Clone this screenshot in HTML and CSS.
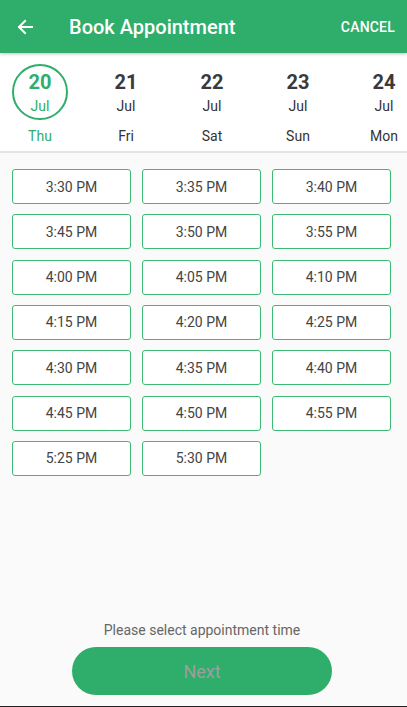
FILE: index.html
```html
<!DOCTYPE html>
<html lang="en">
<head>
  <meta charset="UTF-8" />
  <meta name="viewport" content="width=device-width, initial-scale=1.0"/>
  <title>Book Appointment</title>
  <link rel="stylesheet" href="styles.css">
</head>
<body>
  <div class="app">
    <header class="topbar">
      <button class="back" aria-label="Back">
        <svg width="16" height="16" viewBox="0 0 16 16">
          <path d="M15 8H2M8 2L2 8l6 6" fill="none" stroke="#fff" stroke-width="2" stroke-linecap="square"/>
        </svg>
      </button>
      <h1 class="title">Book Appointment</h1>
      <span class="cancel">CANCEL</span>
    </header>

    <div class="dates">
      <div class="date selected">
        <div class="circle">
          <span class="num">20</span>
          <span class="mon">Jul</span>
        </div>
        <span class="day">Thu</span>
      </div>
      <div class="date">
        <div class="circle"><span class="num">21</span><span class="mon">Jul</span></div>
        <span class="day">Fri</span>
      </div>
      <div class="date">
        <div class="circle"><span class="num">22</span><span class="mon">Jul</span></div>
        <span class="day">Sat</span>
      </div>
      <div class="date">
        <div class="circle"><span class="num">23</span><span class="mon">Jul</span></div>
        <span class="day">Sun</span>
      </div>
      <div class="date">
        <div class="circle"><span class="num">24</span><span class="mon">Jul</span></div>
        <span class="day">Mon</span>
      </div>
    </div>

    <main class="slots">
      <div class="grid" id="grid"></div>
    </main>

    <footer class="footer">
      <p class="hint">Please select appointment time</p>
      <button class="next" disabled>Next</button>
    </footer>
    <div class="navline"></div>
  </div>

  <script>
    const times = ["3:30 PM", "3:35 PM", "3:40 PM", "3:45 PM", "3:50 PM", "3:55 PM",
      "4:00 PM", "4:05 PM", "4:10 PM", "4:15 PM", "4:20 PM", "4:25 PM",
      "4:30 PM", "4:35 PM", "4:40 PM", "4:45 PM", "4:50 PM", "4:55 PM",
      "5:25 PM", "5:30 PM"];
    const grid = document.getElementById("grid");
    times.forEach((t) => {
      const b = document.createElement("button");
      b.className = "slot";
      b.textContent = t;
      grid.appendChild(b);
    });
  </script>
</body>
</html>
```

FILE: styles.css
```css
* {
  box-sizing: border-box;
}
body {
  margin: 0;
  font-family: Roboto, "Noto Sans", sans-serif;
  background: #fafafa;
}
.app {
  height: 707px;
  display: flex;
  flex-direction: column;
  overflow: hidden;
}
.topbar {
  height: 53px;
  background: #2eae6a;
  color: #fff;
  display: flex;
  align-items: center;
  padding: 0 12px 0 17px;
  box-shadow: 0 1px 3px rgba(0, 0, 0, 0.25);
  position: relative;
  z-index: 1;
}
.back {
  background: none;
  border: none;
  padding: 0;
  width: 16px;
  height: 16px;
  display: flex;
}
.title {
  margin: 0 0 0 36px;
  font-size: 20px;
  font-weight: 500;
  flex: 1;
}
.cancel {
  font-size: 14px;
  font-weight: 500;
  letter-spacing: 0.2px;
}
.dates {
  background: #fff;
  height: 100px;
  display: flex;
  gap: 30px;
  padding: 11px 0 0 12px;
  border-bottom: 2px solid #e4e4e4;
  overflow: hidden;
}
.date {
  width: 56px;
  flex: none;
  display: flex;
  flex-direction: column;
  align-items: center;
  color: #333;
}
.circle {
  width: 56px;
  height: 56px;
  border-radius: 50%;
  border: 2px solid transparent;
  display: flex;
  flex-direction: column;
  align-items: center;
  justify-content: center;
  padding-top: 2px;
}
.num {
  font-size: 20px;
  font-weight: 700;
  line-height: 22px;
  color: #3a3a3a;
}
.mon {
  font-size: 14px;
  line-height: 18px;
  margin-top: 4px;
}
.day {
  font-size: 14px;
  margin-top: 8px;
}
.selected .circle {
  border-color: #2eae6a;
}
.selected .num,
.selected .mon,
.selected .day {
  color: #2eae6a;
}
.slots {
  flex: 1;
  padding: 16px 16px 0 12px;
}
.grid {
  display: grid;
  grid-template-columns: repeat(3, 119px);
  column-gap: 11px;
  row-gap: 10.33px;
}
.slot {
  height: 35px;
  background: #fff;
  border: 1.5px solid #3dbb74;
  border-radius: 3px;
  font-family: inherit;
  font-size: 14px;
  color: #444;
  padding: 0;
}
.footer {
  display: flex;
  flex-direction: column;
  align-items: center;
  padding: 0 3px 11px 0;
}
.hint {
  margin: 0 0 9px;
  font-size: 14px;
  color: #666;
}
.next {
  width: 260px;
  height: 48px;
  border: none;
  border-radius: 24px;
  background: #2eae6a;
  color: #9e9e9e;
  font-family: inherit;
  font-size: 18px;
}
.navline {
  height: 1px;
  background: #222;
}
```
